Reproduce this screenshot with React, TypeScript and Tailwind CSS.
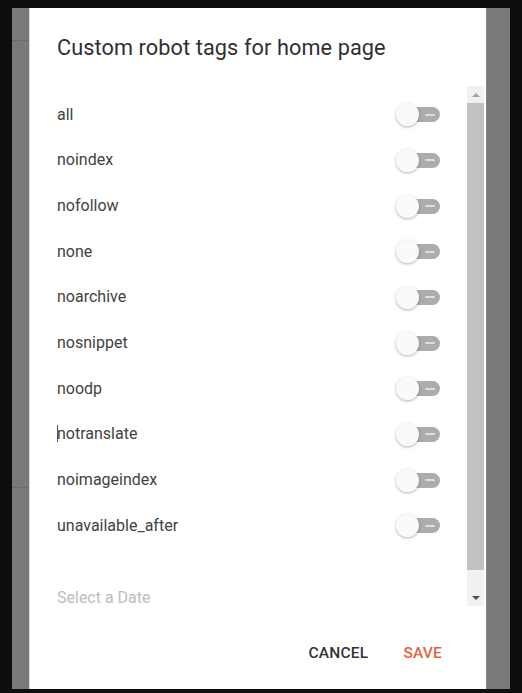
import React from "react";

const tags = [
  "all",
  "noindex",
  "nofollow",
  "none",
  "noarchive",
  "nosnippet",
  "noodp",
  "notranslate",
  "noimageindex",
  "unavailable_after",
];

function Toggle() {
  return (
    <div className="relative w-[44px] h-[24px] flex items-center">
      {/* track */}
      <div className="absolute left-[14px] right-0 h-[15px] rounded-full bg-[#acacac] flex items-center justify-end pr-[5px]">
        <div className="w-[10px] h-[2px] bg-[#dedede] rounded-full" />
      </div>
      {/* thumb */}
      <div className="relative w-[23px] h-[23px] rounded-full bg-[#fafafa] shadow-[0_1px_3px_rgba(0,0,0,0.3)]" />
    </div>
  );
}

function Scrollbar() {
  return (
    <div className="w-[17px] shrink-0 bg-[#f1f1f1] flex flex-col items-center">
      <div className="h-[17px] flex items-center justify-center">
        <div className="w-0 h-0 border-l-[4px] border-r-[4px] border-b-[4px] border-l-transparent border-r-transparent border-b-[#a3a3a3]" />
      </div>
      <div className="w-full h-[467px] bg-[#c1c1c1]" />
      <div className="flex-1" />
      <div className="h-[17px] flex items-center justify-center">
        <div className="w-0 h-0 border-l-[4px] border-r-[4px] border-t-[4px] border-l-transparent border-r-transparent border-t-[#505050]" />
      </div>
    </div>
  );
}

export default function App() {
  return (
    <div
      className="w-[522px] h-[693px] bg-[#0e0e0e] pt-[8px] px-[12px] pb-[4px] flex"
      style={{ fontFamily: "Roboto, 'Liberation Sans', sans-serif" }}
    >
      <div className="w-[17px] bg-[#7a7a7a] flex flex-col">
        <div className="h-[32px]" />
        <div className="h-px bg-[#6c6c6c]" />
        <div className="h-[446px]" />
        <div className="h-px bg-[#6c6c6c]" />
      </div>
      <div className="w-[457px] bg-white border-l border-[#d8d8d8] flex flex-col">
        <div className="h-[78px] pl-[27px] pt-[25px]">
          <h1 className="text-[21.7px] leading-[30px] font-normal text-[#2f2f2f] tracking-[0.1px]">
            Custom robot tags for home page
          </h1>
        </div>
        <div className="h-[520px] flex pr-[2px]">
          <div className="flex-1 overflow-hidden pt-[6px]">
            {tags.map((t) => (
              <div
                key={t}
                className="h-[45.67px] flex items-center justify-between pl-[27px] pr-[27px]"
              >
                <span className="text-[16px] text-[#424242]">
                  {t === "notranslate" ? (
                    <>
                      <span className="inline-block w-px h-[17px] bg-[#555] align-[-3px] -mr-px" />
                      notranslate
                    </>
                  ) : (
                    t
                  )}
                </span>
                <Toggle />
              </div>
            ))}
            <div className="pl-[27px] pt-[41px] text-[16px] leading-[16px] text-[#bdbdbd]">
              Select a Date
            </div>
          </div>
          <Scrollbar />
        </div>
        <div className="flex-1 flex items-start justify-end pt-[36px] pr-[44px] gap-[35px]">
          <button className="text-[15.5px] font-medium text-[#333333] tracking-[0.2px]">CANCEL</button>
          <button className="text-[15.5px] font-medium text-[#e0643c] tracking-[0.2px]">SAVE</button>
        </div>
      </div>
      <div className="w-[24px] bg-[#7a7a7a] border-l border-[#8a8a8a]" />
    </div>
  );
}
